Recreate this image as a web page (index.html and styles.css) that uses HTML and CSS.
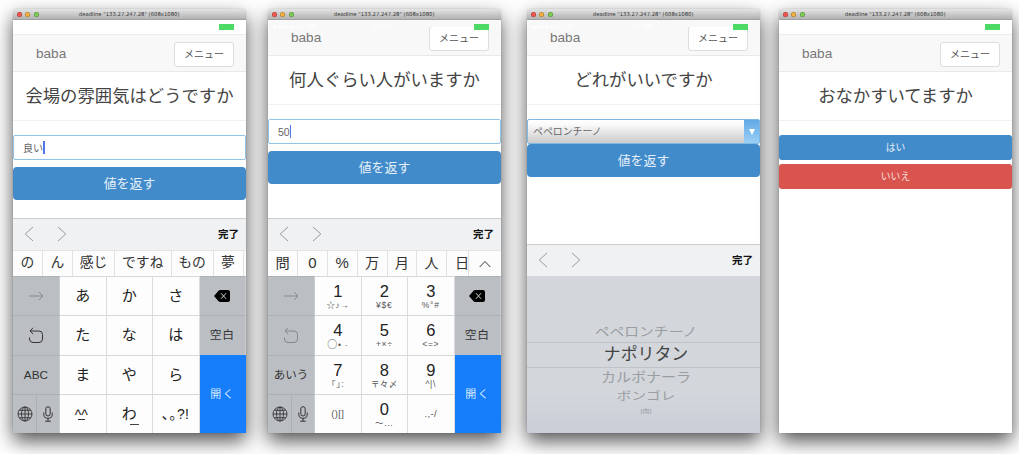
FILE: index.html
```
<!DOCTYPE html>
<html lang="ja">
<head>
<meta charset="utf-8">
<title>deadline</title>
<link rel="stylesheet" href="styles.css">
</head>
<body>
<svg width="0" height="0" class="defs">
  <symbol id="prev" viewBox="0 0 10 16"><path d="M9 1 1.2 8 9 15"/></symbol>
  <symbol id="next" viewBox="0 0 10 16"><path d="M1 1 8.8 8 1 15"/></symbol>
  <symbol id="up" viewBox="0 0 12 8"><path d="M.7 7 6 1.5 11.300 7"/></symbol>
  <symbol id="arrow" viewBox="0 0 15 10"><path d="M0 5H14M10 1 14 5 10 9"/></symbol>
  <symbol id="undo" viewBox="0 0 16 17"><path d="M5 .8 2 4 5.200 7M2 4H11Q14.500 4 14.500 7.500V12Q14.500 15.500 11 15.500H5Q1.500 15.500 1.500 12V10.500"/></symbol>
  <symbol id="del" viewBox="0 0 16 12"><path class="solid" d="M0 6 4.500.8Q5.200 0 6.200 0H14Q16 0 16 2V10Q16 12 14 12H6.200Q5.200 12 4.500 11.200Z"/><path class="cross" d="M7 3.200 12 8.800M12 3.200 7 8.800"/></symbol>
  <symbol id="globe" viewBox="0 0 16 16"><circle cx="8" cy="8" r="7"/><ellipse cx="8" cy="8" rx="3.500" ry="7"/><path d="M1 8H15M8 1V15M2.200 4.300H13.800M2.200 11.700H13.800"/></symbol>
  <symbol id="mic" viewBox="0 0 10 16"><rect x="2.800" y=".7" width="4.400" height="9.300" rx="2.200"/><path d="M.8 6.500V8.500Q.8 12.300 5 12.300T9.200 8.500V6.500M5 12.300V15.200M2.200 15.200H7.800"/></symbol>
  <symbol id="wifi" viewBox="0 0 9 7"><path d="M.5 2.500Q4.500-1 8.500 2.500M2 4.200Q4.500 2 7 4.200M4.500 5.500V6.500"/></symbol>
</svg>
<main class="desk">

  <section class="window">
    <header class="titlebar"><i class="light red"></i><i class="light yellow"></i><i class="light green"></i><span>deadline "133.27.247.28" (608x1080)</span></header>
    <div class="screen">
      <div class="status"><i class="battery"></i></div>
      <nav class="nav"><span class="brand">baba</span><span class="menu">メニュー</span></nav>
      <h1 class="question">会場の雰囲気はどうですか</h1>
      <div class="field">良い<i class="caret"></i></div>
      <div class="btn submit">値を返す</div>
      <div class="dock">
        <div class="toolbar"><svg class="chev"><use href="#prev"/></svg><svg class="chev"><use href="#next"/></svg><b>完了</b></div>
        <div class="words words-text"><span>の</span><span>ん</span><span>感じ</span><span>ですね</span><span>もの</span><span>夢</span><span></span></div>
        <div class="keys">
          <div class="key side"><svg class="arrow dim"><use href="#arrow"/></svg></div><div class="key">あ</div><div class="key">か</div><div class="key">さ</div><div class="key side"><svg class="del"><use href="#del"/></svg></div>
          <div class="key side"><svg class="undo"><use href="#undo"/></svg></div><div class="key">た</div><div class="key">な</div><div class="key">は</div><div class="key side space">空白</div>
          <div class="key side abc">ABC</div><div class="key">ま</div><div class="key">や</div><div class="key">ら</div><div class="key go">開く</div>
          <div class="key side pair"><span><svg class="globe"><use href="#globe"/></svg></span><span><svg class="mic"><use href="#mic"/></svg></span></div><div class="key face"><span>^^</span><i></i></div><div class="key"><span class="wa">わ<i></i></span></div><div class="key punct">､｡?!</div>
        </div>
      </div>
    </div>
  </section>

  <section class="window">
    <header class="titlebar"><i class="light red"></i><i class="light yellow"></i><i class="light green"></i><span>deadline "133.27.247.28" (608x1080)</span></header>
    <div class="screen scrolled">
      <div class="status"><span class="carrier">●●●●● au <svg class="wifi"><use href="#wifi"/></svg></span><span class="clock">21:58</span><i class="battery"></i></div>
      <nav class="nav"><span class="brand">baba</span><span class="menu">メニュー</span></nav>
      <h1 class="question">何人ぐらい人がいますか</h1>
      <div class="field number">50<i class="caret"></i></div>
      <div class="btn submit">値を返す</div>
      <div class="dock">
        <div class="toolbar"><svg class="chev"><use href="#prev"/></svg><svg class="chev"><use href="#next"/></svg><b>完了</b></div>
        <div class="words words-num"><span>問</span><span>0</span><span>%</span><span>万</span><span>月</span><span>人</span><span class="cut">日</span><span><svg class="up"><use href="#up"/></svg></span></div>
        <div class="keys digits">
          <div class="key side"><svg class="arrow dim"><use href="#arrow"/></svg></div><div class="key">1<small class="wide">☆♪→</small></div><div class="key">2<small>¥$€</small></div><div class="key">3<small>%°#</small></div><div class="key side"><svg class="del"><use href="#del"/></svg></div>
          <div class="key side"><svg class="undo dim"><use href="#undo"/></svg></div><div class="key">4<small class="dots"><em>○</em>•&nbsp;·</small></div><div class="key">5<small>+×÷</small></div><div class="key">6<small>&lt;=&gt;</small></div><div class="key side space">空白</div>
          <div class="key side kana">あいう</div><div class="key">7<small>｢｣:</small></div><div class="key">8<small class="wide">〒々〆</small></div><div class="key">9<small>^|\</small></div><div class="key go">開く</div>
          <div class="key side pair"><span><svg class="globe"><use href="#globe"/></svg></span><span><svg class="mic"><use href="#mic"/></svg></span></div><div class="key signs">()[]</div><div class="key">0<small>〜...</small></div><div class="key signs">.,-/</div>
        </div>
      </div>
    </div>
  </section>

  <section class="window">
    <header class="titlebar"><i class="light red"></i><i class="light yellow"></i><i class="light green"></i><span>deadline "133.27.247.28" (608x1080)</span></header>
    <div class="screen scrolled">
      <div class="status"><span class="carrier">●●●●● au <svg class="wifi"><use href="#wifi"/></svg></span><span class="clock">21:56</span><i class="battery"></i></div>
      <nav class="nav"><span class="brand">baba</span><span class="menu">メニュー</span></nav>
      <h1 class="question">どれがいいですか</h1>
      <div class="select"><span>ペペロンチーノ</span><i></i></div>
      <div class="btn submit joined">値を返す</div>
      <div class="dock">
        <div class="toolbar"><svg class="chev"><use href="#prev"/></svg><svg class="chev"><use href="#next"/></svg><b>完了</b></div>
        <div class="picker"><span class="p1">ペペロンチーノ</span><span class="p2">ナポリタン</span><span class="p3">カルボナーラ</span><span class="p4">ボンゴレ</span><span class="p5">[肉]</span></div>
      </div>
    </div>
  </section>

  <section class="window">
    <header class="titlebar"><i class="light red"></i><i class="light yellow"></i><i class="light green"></i><span>deadline "133.27.247.28" (608x1080)</span></header>
    <div class="screen">
      <div class="status"><i class="battery"></i></div>
      <nav class="nav"><span class="brand">baba</span><span class="menu">メニュー</span></nav>
      <h1 class="question">おなかすいてますか</h1>
      <div class="btn answer">はい</div>
      <div class="btn answer danger">いいえ</div>
    </div>
  </section>

</main>
</body>
</html>
```
FILE: styles.css
```
* { box-sizing: border-box; }
body { margin: 0; height: 454px; overflow: hidden; background: #fff; color: #444; font-family: "Liberation Sans", "Noto Sans CJK JP", sans-serif; }
.defs { display: block; position: absolute; }
svg { fill: none; stroke: currentColor; display: block; }
.desk { display: grid; grid-template-columns: 255px 259px 252px 233px; padding: 9px 0 0 13px; }
.window { width: 233px; height: 424px; border-radius: 3px 3px 0 0; background: #fff; box-shadow: 0 8px 19px rgba(0,0,0,.68), 0 0 1px rgba(0,0,0,.4); }
.titlebar { display: flex; align-items: center; gap: 3.600px; height: 11px; padding-left: 3.500px; border-radius: 3px 3px 0 0; background: linear-gradient(#e4e4e4, #b2b2b2); border-bottom: 1px solid #a0a0a0; color: #333; }
.titlebar span { flex: 1; margin-right: 30px; text-align: center; white-space: nowrap; font: 5.300px/10px "DejaVu Sans", sans-serif; }
.light { width: 5px; height: 5px; border-radius: 50%; box-shadow: inset 0 0 0 .5px rgba(0,0,0,.3); }
.red { background: #f0564f; } .yellow { background: #f4b03d; } .green { background: #7ccb52; }
.screen { position: relative; display: flex; flex-direction: column; height: 413px; }
.status { position: relative; height: 14px; flex: none; z-index: 2; }
.battery { position: absolute; right: 12px; top: 4px; width: 15px; height: 6px; background: #4cd964; }
.scrolled .status { height: 7px; margin-bottom: -7px; color: #fff; font-size: 7px; line-height: 14px; background: #f8f8f8; }
.carrier { position: absolute; left: 5px; top: 0; display: flex; gap: 3px; align-items: center; }
.wifi { width: 9px; height: 7px; }
.clock { position: absolute; left: 105px; top: 0; font-size: 8px; }
.nav { display: flex; justify-content: space-between; flex: none; height: 38px; padding: 7px 12px 0 23px; background: #f8f8f8; border-top: 1px solid #ececec; border-bottom: 1px solid #e9e9e9; }
.scrolled .nav { height: 36px; padding-top: 6px; border-top: 0; }
.brand { font-size: 13.600px; line-height: 24px; color: #777; }
.menu { width: 60px; height: 25px; border: 1px solid #ddd; border-radius: 3px; background: #fff; font-size: 10px; line-height: 23px; text-align: center; color: #555; }
.question { flex: none; margin: 0 0 14px; height: 49px; border-bottom: 1px solid #f0f0f0; font-size: 17.350px; line-height: 49px; font-weight: 400; text-align: center; color: #444; white-space: nowrap; }
.field { display: flex; align-items: center; flex: none; height: 25px; margin-bottom: 7px; padding-left: 9px; border: 1px solid #8fc3e8; border-radius: 2px; font-size: 10px; color: #666; background: #fff; }
.number { font-size: 10.500px; }
.caret { width: 1.500px; height: 13px; background: #5277ea; }
.btn { flex: none; border-radius: 4px; background: #428bca; color: #e4eff8; text-align: center; }
.submit { height: 33px; font-size: 12.900px; line-height: 33px; }
.answer { height: 25px; margin-bottom: 3.500px; font-size: 9.800px; line-height: 25px; border-radius: 3px; }
.danger { background: #d9534f; color: #f8e0df; }
.select { display: flex; flex: none; height: 25px; border: 1px solid #7eb8e3; border-radius: 2px; background: linear-gradient(#fff, #fafafa 20%, #cacaca); font-size: 9.900px; line-height: 23px; color: #666; }
.select span { flex: 1; padding-left: 5px; }
.select i { display: grid; place-items: center; width: 15px; background: linear-gradient(#62a9e6, #9bd0f6); }
.select i::after { content: ""; border: 3.500px solid transparent; border-top: 6px solid #fff; border-bottom: 0; }
.dock { margin-top: auto; flex: none; }
.toolbar { display: flex; align-items: center; height: 32px; padding: 0 7px 0 11px; background: #eff1f2; border-top: 1px solid #cbcdcf; color: #111; }
.toolbar b { margin-left: auto; font-size: 10.500px; line-height: 31px; }
.chev { width: 10px; height: 16px; margin: 0 22.500px 1px 0; color: #999; }
.words { display: grid; height: 26px; background: #fcfcfc; color: #333; font-size: 13.800px; line-height: 24px; text-align: center; border-top: 1px solid #e2e4e6; }
.words span { border-right: 1px solid #dfe1e3; overflow: hidden; white-space: nowrap; }
.words-text { grid-template-columns: 30px 30px 42px 56.500px 42px 30px 1fr; }
.words-num { grid-template-columns: 30px 30px 29.500px 30px 29.500px 30px 21.500px 1fr; font-size: 14.200px; }
.words-num span:nth-child(2), .words-num span:nth-child(3) { font-size: 15px; }
.words .cut { padding-left: 8px; text-align: left; }
.words span:last-child { border: 0; display: grid; place-items: center; }
.up { width: 12px; height: 8px; }
.keys { display: grid; grid-template-columns: 47px repeat(4, 46.500px); grid-template-rows: repeat(4, 39.250px); font-size: 15px; color: #222; }
.key { display: flex; flex-direction: column; align-items: center; justify-content: center; background: #fdfdfd; border-top: 1px solid #d5d8db; border-right: 1px solid #d9dcde; line-height: 20px; }
.side { background: #bbbfc4; border-color: #acb0b5; color: #333; border-right-color: #c9ccd0; }
.arrow { width: 15px; height: 10px; } .undo { width: 16px; height: 17px; }
.dim { color: #85898e; }
.del { width: 16px; height: 12px; }
.solid { fill: #000; stroke: none; } .cross { stroke: #c8cbcf; }
.space { font-size: 11.800px; letter-spacing: .8px; }
.abc { font-size: 11.800px; } .kana { font-size: 11.500px; }
.go { grid-column: 5; grid-row: 3 / 5; background: #167efb; border: 0; color: #d8eaff; font-size: 11px; letter-spacing: 1.500px; }
.pair { display: grid; grid-template-columns: 23px 1fr; }
.pair span { display: grid; place-items: center; height: 100%; } .pair span + span { border-left: 1px solid #acb0b5; }
.globe { width: 16px; height: 16px; stroke-width: .9; } .mic { width: 10px; height: 16px; }
.face { font-size: 14px; line-height: 10px; padding-top: 2px; padding-right: 3px; } .face i { width: 7px; height: 1px; background: #333; margin-top: -1px; }
.wa { position: relative; } .wa i { position: absolute; right: -2px; bottom: -1px; width: 9px; height: 1px; background: #444; }
.punct { font-size: 14px; letter-spacing: .4px; }
.digits .key:not(.side):not(.go):not(.signs) { font-size: 16.500px; line-height: 18px; padding-top: 1px; }
.digits small { font-size: 8.500px; line-height: 11px; letter-spacing: .7px; color: #555; white-space: nowrap; }
.digits .wide { letter-spacing: .4px; }
.digits em { font: 10px/10px "Noto Sans CJK JP", sans-serif; }
.digits .signs { font-size: 9.500px; color: #555; letter-spacing: .4px; }
.picker { position: relative; height: 157px; padding-top: 45px; display: flex; flex-direction: column; align-items: center; background: linear-gradient(#d3d6db 75%, #c9ced8); color: #9a9da2; }
.picker span { text-align: center; white-space: nowrap; padding-left: 5px; }
.p1 { height: 21px; font-size: 14.800px; line-height: 22px; transform: scaleY(.86); }
.p2 { width: 100%; height: 26px; border: solid #bfc3c8; border-width: 1px 0; font-size: 16.900px; line-height: 24px; color: #444; }
.p3 { height: 20px; font-size: 15px; line-height: 18px; transform: scaleY(.9); }
.p4 { height: 18px; font-size: 14.800px; line-height: 17px; transform: scaleY(.76); }
.p5 { height: 12px; font-size: 7px; line-height: 10px; transform: scaleY(.8); }
```
